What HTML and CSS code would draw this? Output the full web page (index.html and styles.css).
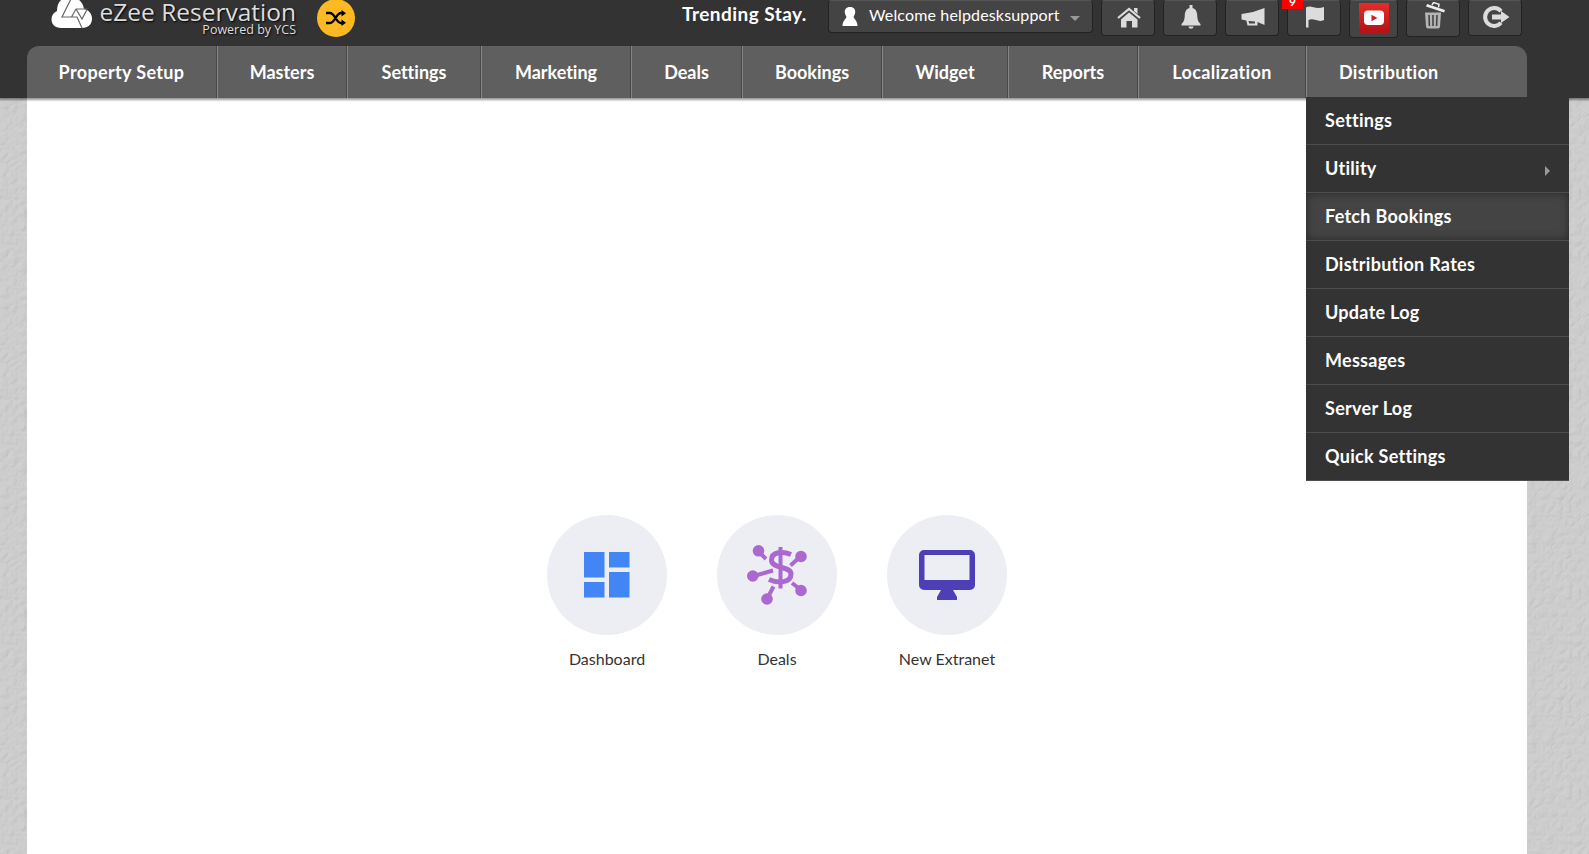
FILE: index.html
```
<!DOCTYPE html>
<html lang="en">
<head>
  <meta charset="UTF-8" />
  <meta name="viewport" content="width=device-width, initial-scale=1.0" />
  <title>eZee Reservation</title>
  <link rel="stylesheet" href="styles.css">
</head>
<body>
  <header class="header">
    <div class="topbar">
      <div class="brand">
        <svg class="cloud" viewBox="0 0 42 30">
          <path fill="#fff" d="M10 28C4 28 .5 24 .5 19.500c0-4 2-7 5.500-8.500C6 4 9-3 19-3c9 0 13 6 14 12 5 1 8 5 8 9.500 0 6-4 9.500-10 9.500z"/>
          <path fill="none" stroke="#666" stroke-width="1.200" d="M20-1L11 17H26L31 28M25 9L31 19L36 9.500M36 9H25L20.500 17"/>
        </svg>
        <div class="brand-text">
          <span class="brand-name">eZee Reservation</span>
          <span class="brand-sub">Powered by YCS</span>
        </div>
      </div>
      <div class="shuffle">
        <svg width="20" height="16" viewBox="0 0 20 16" fill="none" stroke="#000" stroke-width="2.400">
          <path d="M0 3h4c5 0 6 10 11 10h2M0 13h4c5 0 6-10 11-10h2"/>
          <path fill="#000" stroke="none" d="M15.500 0l4.500 3.200-4.500 3.300zM15.500 9.500l4.500 3.300-4.500 3.200z"/>
        </svg>
      </div>
      <div class="property">Trending Stay.</div>
      <div class="user">
        <svg width="16" height="19" viewBox="0 0 16 19" fill="#fff"><path d="M8 0c4 0 5.500 2.500 5.200 5.500-.2 2-1.200 3-1.700 4.500.7 2 4 4 4 9H.5c0-5 3.300-7 4-9-.5-1.500-1.500-2.500-1.700-4.500C2.500 2.500 4 0 8 0z"/></svg>
        <span class="user-name">Welcome helpdesksupport</span>
        <span class="caret"></span>
      </div>
      <div class="tools">
        <a class="tool">
          <svg width="24" height="21" viewBox="0 0 24 21"><path fill="none" stroke="#dcdcdc" stroke-width="2.200" d="M1 11L12 2l11 9"/><path d="M17 1h3.500v6L17 4zM12 5.500l8.500 7V20.500H15V14H9.500v6.500H4v-8z"/></svg>
        </a>
        <a class="tool">
          <svg width="20" height="24" viewBox="0 0 20 24"><path d="M8.500 0h3v3c3.500.7 4.500 4 4.700 7 .2 4 .5 6 3.300 9v1.500H.5V19c2.800-3 3.100-5 3.300-9C4 7 5 3.700 8.500 3zM7.500 21.500h5c0 3-5 3-5 0z"/></svg>
        </a>
        <a class="tool">
          <svg width="24" height="20" viewBox="0 0 24 20"><path d="M23.500 1v17L16.500 15v3.500H6.500l-1.200-5L.5 12.500V7L12 5zM7.500 14l.7 2.500H14V14.500z" fill-rule="evenodd"/></svg>
        </a>
        <a class="tool">
          <svg width="18" height="22" viewBox="0 0 18 22"><path d="M0 1.500C5-1.500 9 4 18 1v13c-6 3-10-2.500-15.500 0v7.500H0z"/></svg>
          <span class="badge">9</span>
        </a>
        <a class="tool tool-video">
          <svg width="30" height="30" viewBox="0 0 30 30"><rect width="30" height="30" fill="url(#red)"/><rect x="5" y="7.500" width="20" height="14.500" rx="4" fill="#fff"/><path fill="#cf2020" d="M12.500 11.800l6 3.200-6 3.200z"/><defs><linearGradient id="red" x2="0" y2="1"><stop stop-color="#e52d27"/><stop offset="1" stop-color="#b31217"/></linearGradient></defs></svg>
        </a>
        <a class="tool tool-trash">
          <svg width="22" height="27" viewBox="0 0 22 27"><path d="M3 2l18 6-1 2.500-18-6z" fill="#eee"/><path d="M8 3l1.500-2.500L15 2.300l-.5 3" fill="none" stroke="#eee" stroke-width="1.500"/><path d="M1 10.500h16l-1 14c0 1-1 2-2 2H4c-1 0-2-1-2-2z" fill="#b4b4b4"/><path d="M5 13l.4 11M9 13v11M13 13l-.4 11" stroke="#444" stroke-width="1.600"/></svg>
        </a>
        <a class="tool">
          <svg width="28" height="22" viewBox="0 0 28 22"><path fill="none" stroke="#dcdcdc" stroke-width="4" d="M19 5.200A9 9 0 1 0 19 16.800"/><path d="M10 8.500h9V5l8.500 6-8.500 6v-3.500h-9z"/></svg>
        </a>
      </div>
    </div>
    <nav class="nav">
      <a class="wide">Property Setup</a>
      <a>Masters</a>
      <a>Settings</a>
      <a>Marketing</a>
      <a>Deals</a>
      <a>Bookings</a>
      <a>Widget</a>
      <a>Reports</a>
      <a class="wide">Localization</a>
      <div class="nav-open">
        <a>Distribution</a>
        <ul class="menu">
          <li>Settings</li>
          <li class="has-sub">Utility</li>
          <li class="active">Fetch Bookings</li>
          <li>Distribution Rates</li>
          <li>Update Log</li>
          <li>Messages</li>
          <li>Server Log</li>
          <li>Quick Settings</li>
        </ul>
      </div>
    </nav>
  </header>

  <main class="content">
    <div class="shortcuts">
      <a class="shortcut">
        <span class="circle">
          <svg width="46" height="46" viewBox="0 0 46 46" fill="#4285f4"><path d="M0 0h20.500v25.500H0zM25 0h20.500v15.500H25zM25 20h20.500v25.500H25zM0 30h20.500v15.500H0z"/></svg>
        </span>
        <span>Dashboard</span>
      </a>
      <a class="shortcut">
        <span class="circle">
          <svg width="60" height="60" viewBox="0 0 60 60">
            <g stroke="#ab68cf" stroke-width="4"><path d="M11 6l8 8M54 11L43.500 20.500M5 31.500l21-6M20 54l6.500-12.500M54 45l-9-7"/></g>
            <g fill="#ab68cf"><circle cx="11.500" cy="5.800" r="5.800"/><circle cx="54" cy="11.500" r="5.800"/><circle cx="5.800" cy="31" r="5.800"/><circle cx="20" cy="54" r="5.800"/><circle cx="54" cy="45.500" r="5.800"/></g>
            <path fill="none" stroke="#ab68cf" stroke-width="5" d="M44 9.500C36 6 24.500 6.500 24.500 15c0 9.500 19.500 5.500 19.500 14 0 9-13 9.500-22 5.500"/>
            <path stroke="#ab68cf" stroke-width="4" d="M33.500 2v41.500"/>
          </svg>
        </span>
        <span>Deals</span>
      </a>
      <a class="shortcut">
        <span class="circle">
          <svg width="56" height="50" viewBox="0 0 56 50" fill="#4f3fb6"><path fill-rule="evenodd" d="M5 0h46a5 5 0 0 1 5 5v30a5 5 0 0 1-5 5H34l4 7v3H18v-3l4-7H5a5 5 0 0 1-5-5V5a5 5 0 0 1 5-5zM5.500 5v25h45V5z"/></svg>
        </span>
        <span>New Extranet</span>
      </a>
    </div>
  </main>
</body>
</html>
```
FILE: styles.css
```
* {
  box-sizing: border-box;
}
body {
  margin: 0;
  height: 854px;
  overflow: hidden;
  display: flex;
  flex-direction: column;
  font-family: "Trebuchet MS", Lato, sans-serif;
  font-variant-ligatures: none;
  background: #cacaca url("data:image/svg+xml,%3Csvg xmlns='http://www.w3.org/2000/svg' width='200' height='200'%3E%3Cfilter id='n' x='0' y='0' width='1' height='1'%3E%3CfeTurbulence baseFrequency='.11' numOctaves='2' stitchTiles='stitch' result='t'/%3E%3CfeDiffuseLighting in='t' surfaceScale='.8' lighting-color='%23d0d0d0'%3E%3CfeDistantLight azimuth='225' elevation='75'/%3E%3C/feDiffuseLighting%3E%3C/filter%3E%3Crect width='200' height='200' filter='url(%23n)'/%3E%3C/svg%3E");
}
.header {
  position: relative;
  z-index: 1;
  height: 98px;
  flex: none;
  background: #333;
  box-shadow: 0 1px 2px 1px rgba(0,0,0,0.4);
}
.topbar {
  display: flex;
  align-items: flex-start;
  height: 46px;
  padding-left: 51px;
}
.brand {
  display: flex;
  width: 266px;
  color: #ddd;
  font-family: "Open Sans", sans-serif;
}
.cloud {
  width: 42px;
  height: 30px;
  margin-right: 4px;
}
.brand-text {
  display: flex;
  flex-direction: column;
  align-items: flex-end;
  width: 199px;
  white-space: nowrap;
  text-shadow: 1px 1px 2px #000;
}
.brand-name {
  font-size: 24.5px;
  line-height: 24px;
}
.brand-sub {
  font-size: 12.5px;
  line-height: 11px;
}
.shuffle {
  display: flex;
  align-items: center;
  justify-content: center;
  width: 38px;
  height: 38px;
  margin-top: -1px;
  border-radius: 50%;
  background: #fdb924;
}
.property {
  width: 126px;
  margin-left: 327px;
  font-size: 19px;
  font-weight: bold;
  letter-spacing: 0.45px;
  line-height: 28px;
  color: #fff;
  white-space: nowrap;
}
.user {
  display: flex;
  align-items: center;
  width: 265px;
  height: 33px;
  margin-left: 20px;
  padding: 0 12px 0 13px;
  background: #444;
  border: 1px solid #222;
  border-top-color: #555;
  border-radius: 4px;
  color: #fff;
  white-space: nowrap;
}
.user-name {
  width: 190px;
  margin: 0 11px 0 11px;
  padding-bottom: 4px;
  font-size: 16px;
  letter-spacing: 0.15px;
}
.caret {
  margin-top: 4px;
  border: 5px solid transparent;
  border-top-color: #999;
  border-bottom: 0;
}
.tools {
  display: flex;
  gap: 8px;
  margin-left: 8px;
}
.tool {
  position: relative;
  display: flex;
  align-items: center;
  justify-content: center;
  width: 54px;
  height: 36px;
  padding: 0 0 2px 1px;
  background: #444;
  border: 1px solid #222;
  border-top-color: #555;
  border-radius: 4px;
  fill: #dcdcdc;
}
.tool-video {
  width: 49px;
  height: 38px;
}
.tool-trash {
  height: 37px;
  padding: 0 0 6px 4px;
}
.badge {
  position: absolute;
  top: -8px;
  left: -6px;
  width: 21px;
  height: 16px;
  background: #f00;
  color: #fff;
  font-size: 12px;
  font-weight: bold;
  line-height: 18px;
  text-align: center;
}
.nav {
  display: grid;
  grid-template-columns: 190px 130px 134px 150px 111px 140px 126px 130px 168px 221px;
  width: 1500px;
  height: 52px;
  margin-left: 27px;
  background: #5f5f5f;
  border-radius: 12px 12px 0 0;
  color: #fff;
  font-size: 18px;
  font-weight: bold;
  line-height: 53px;
}
.nav > a {
  height: 52px;
  border-left: 1px solid #858585;
  border-right: 1px solid #484848;
  text-align: center;
}
.nav > a:first-child {
  border-left: 0;
}
.nav > .wide {
  letter-spacing: 0.35px;
}
.nav-open {
  position: relative;
  height: 52px;
  padding-left: 32px;
  border-left: 1px solid #858585;
  letter-spacing: 0.28px;
}
.menu {
  position: absolute;
  top: 51px;
  left: -1px;
  width: 263px;
  margin: 0;
  padding: 0;
  list-style: none;
  background: #333;
}
.menu li {
  height: 48px;
  padding-left: 19px;
  border-bottom: 1px solid #4d4d4d;
  line-height: 47px;
}
.menu .has-sub {
  display: flex;
  align-items: center;
  justify-content: space-between;
  padding-right: 19px;
}
.has-sub::after {
  content: "";
  margin-top: 5px;
  border: 5px solid transparent;
  border-left-color: #999;
  border-right: 0;
}
.menu .active {
  background: #444;
  box-shadow: inset 0 0 8px #282828;
}
.content {
  display: flex;
  flex: 1;
  justify-content: center;
  align-items: flex-start;
  width: 1500px;
  margin-left: 27px;
  background: #fff;
}
.shortcuts {
  display: flex;
  gap: 50px;
  margin-top: 417px;
}
.shortcut {
  display: flex;
  flex-direction: column;
  align-items: center;
  width: 120px;
  font-size: 16px;
  color: #333;
}
.circle {
  display: flex;
  align-items: center;
  justify-content: center;
  width: 120px;
  height: 120px;
  margin-bottom: 14px;
  border-radius: 50%;
  background: #edeef3;
}
```
